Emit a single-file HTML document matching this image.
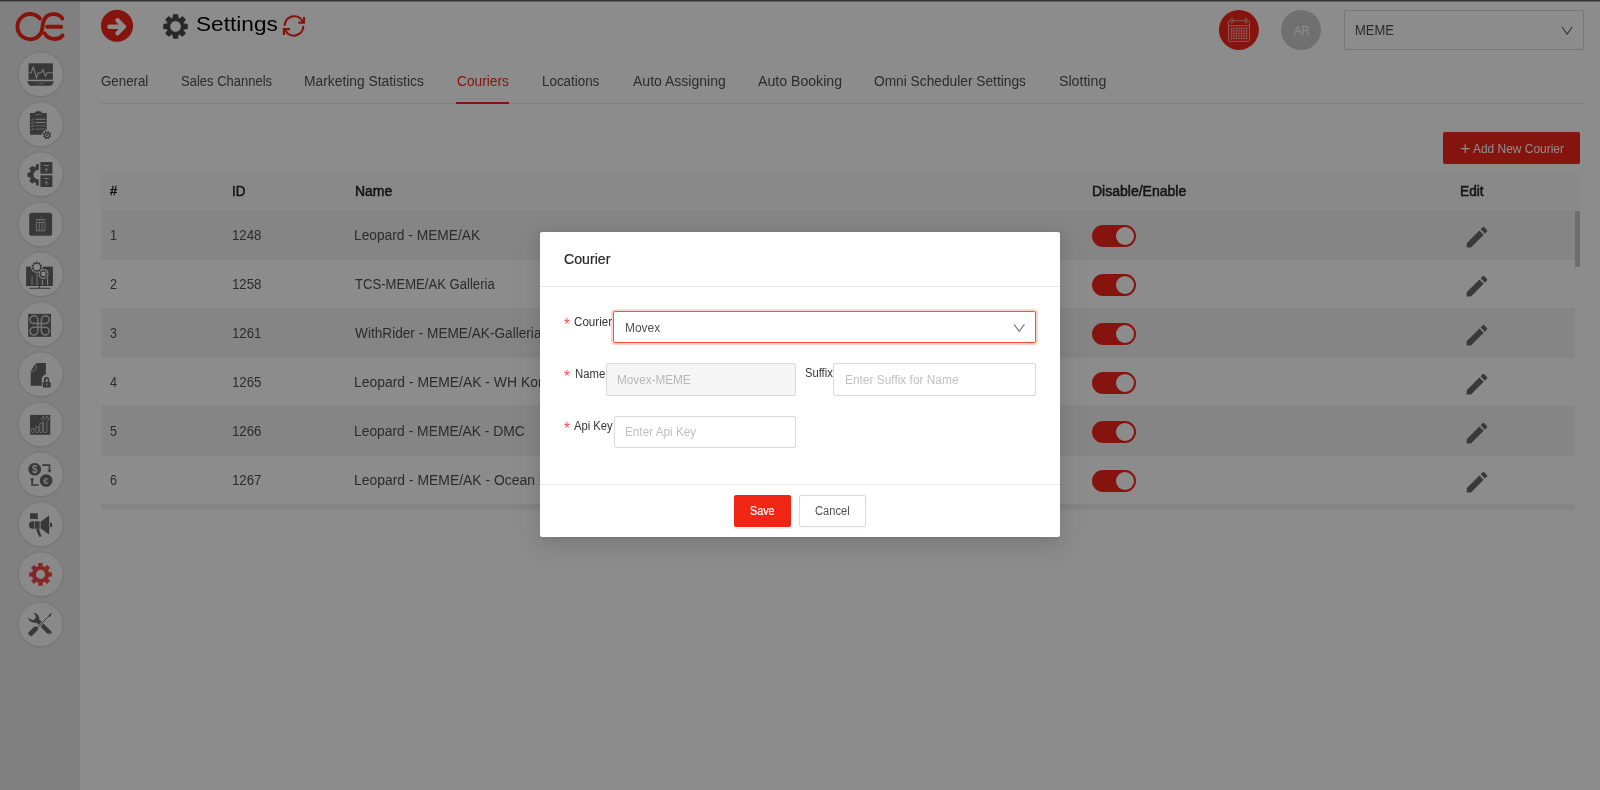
<!DOCTYPE html>
<html lang="en"><head><meta charset="utf-8"><title>Settings - Couriers</title>
<style>
*{box-sizing:border-box}
html,body{margin:0;padding:0}
body{width:1600px;height:790px;overflow:hidden;position:relative;background:#fff;font-family:"Liberation Sans", sans-serif;}
.abs,.t,.row,.tog{position:absolute}
.t{white-space:pre;display:block;transform-origin:0 0}
#page{position:absolute;left:0;top:0;width:1600px;height:790px;overflow:hidden;background:#fff}
#topline{position:absolute;left:0;top:0;width:1600px;height:2px;background:linear-gradient(#5e5e5e 0,#5e5e5e 1px,#b4b4b4 1px,#b4b4b4 2px)}
#sidebar{position:absolute;left:0;top:2px;width:80px;height:788px;background:#e9e9e9}
#tabline{position:absolute;left:101px;top:103px;width:1483px;height:1px;background:#e8e8e8}
#ink{position:absolute;left:456px;top:102px;width:53px;height:2px;background:#f5261a}
#addbtn{position:absolute;left:1443px;top:132px;width:137px;height:32px;border-radius:2px;background:#f5261a}
#thead{position:absolute;left:101px;top:172px;width:1479px;height:38px;background:#fafafa}
#tbody{position:absolute;left:101px;top:210px;width:1474px;height:300px;overflow:hidden}
.row{left:0;width:1474px}
.tog{left:991px;width:44px;height:22px;border-radius:11px;background:#f5261a}
.tog i{position:absolute;left:24px;top:2px;width:18px;height:18px;border-radius:50%;background:#fff}
#sbar{position:absolute;left:1575px;top:211px;width:5px;height:56px;background:#c8c8c8}
#mask{position:absolute;left:0;top:0;width:1600px;height:790px;background:rgba(0,0,0,.45)}
#modal{position:absolute;left:540px;top:232px;width:520px;height:305px;background:#fff;border-radius:2px;box-shadow:0 3px 6px -4px rgba(0,0,0,.12),0 6px 16px 0 rgba(0,0,0,.08),0 9px 28px 8px rgba(0,0,0,.05)}
.ln{position:absolute;left:540px;width:520px;height:1px;background:#e8e8e8}
.inp{position:absolute;height:32px;border:1px solid #d9d9d9;border-radius:2px;background:#fff}
</style></head><body>
<div id="page">
<div id="sidebar"></div>
<div id="topline"></div>
<svg class="abs" style="left:0;top:0;width:1px;height:1px"><defs><filter id="csh" x="-20%" y="-20%" width="140%" height="140%"><feDropShadow dx="0" dy="0.3" stdDeviation="0.9" flood-color="#000" flood-opacity=".26"/></filter></defs></svg>
<svg class="abs" style="left:0px;top:0px;width:80px;height:50px" viewBox="0 0 80 50"><g fill="none" stroke="#f5261a" stroke-width="3.900" stroke-linecap="round"><path d="M39.900 18.600A12.650 12.650 0 1 0 40.800 33.400C43.300 30 41.500 21 46 17C49 13.500 58 12.500 62.400 18.400"/><path d="M44.600 33.400C48 39.800 58 41 62.600 35.400"/><path d="M47 26.800H61.200"/></g></svg>
<svg class="abs" style="left:16px;top:50px;width:50px;height:50px" viewBox="0 0 50 50"><circle cx="24.7" cy="24.35" r="21.85" fill="#fafafa" filter="url(#csh)"/><g transform="translate(2.6 2.4)"><rect x="9.900" y="10.900" width="24.400" height="16.400" fill="#666"/>
<path d="M8.500 28.900H35.400L33.600 32.300Q33 33.400 31.800 33.400H12.100Q10.900 33.400 10.300 32.300Z" fill="#666"/>
<path d="M9.900 20.400H12.600L14.800 14.300L17.800 25.700L19.500 20.400H22.600L24.300 17L27 23.800L28.400 20.400H34.300" fill="none" stroke="#fafafa" stroke-width="1.100" stroke-linejoin="round" opacity=".8"/>
<g fill="#fafafa" opacity=".8"><circle cx="19.700" cy="31" r=".6"/><circle cx="22.100" cy="31" r=".6"/><circle cx="24.500" cy="31" r=".6"/></g></g></svg>
<svg class="abs" style="left:16px;top:100px;width:50px;height:50px" viewBox="0 0 50 50"><circle cx="24.7" cy="24.35" r="21.85" fill="#fafafa" filter="url(#csh)"/><g transform="translate(2.6 2.4)"><path d="M19.550 7.500L20.300 9.200H22.400Q23 9.200 23 9.800V10.600H28.100V32.300H11.300V10.600H16.200V9.800Q16.200 9.200 16.800 9.200H18.800Z" fill="#666"/>
<path d="M16.300 12.300H22.900" stroke="#fafafa" stroke-width=".8" opacity=".6"/>
<g stroke="#fafafa" stroke-width="1.100" fill="none"><path d="M16.700 16.900H27M16.700 20.100H27" opacity=".85"/><path d="M16.700 23.400H27M16.700 26.700H27" opacity=".45"/>
<path d="M12.300 17.200L13.300 18.200L15.300 15.600M12.300 20.400L13.300 21.400L15.300 18.800M12.300 23.700L13.300 24.700L15.300 22.100M12.300 27L13.300 28L15.300 25.400" stroke-width=".9" opacity=".8"/></g>
<circle cx="28.400" cy="32.700" r="5" fill="#fafafa"/>
<path d="M31.48 33.06 L32.50 33.60 L31.94 34.96 L30.83 34.62 L30.32 35.13 L30.66 36.24 L29.30 36.80 L28.76 35.78 L28.04 35.78 L27.50 36.80 L26.14 36.24 L26.48 35.13 L25.97 34.62 L24.86 34.96 L24.30 33.60 L25.32 33.06 L25.32 32.34 L24.30 31.80 L24.86 30.44 L25.97 30.78 L26.48 30.27 L26.14 29.16 L27.50 28.60 L28.04 29.62 L28.76 29.62 L29.30 28.60 L30.66 29.16 L30.32 30.27 L30.83 30.78 L31.94 30.44 L32.50 31.80 L31.48 32.34ZM26.50 32.70a1.90 1.90 0 1 0 3.80 0a1.90 1.90 0 1 0 -3.80 0Z" fill="#666" fill-rule="evenodd"/>
<circle cx="28.400" cy="32.700" r="1" fill="#666"/></g></svg>
<svg class="abs" style="left:16px;top:150px;width:50px;height:50px" viewBox="0 0 50 50"><circle cx="24.7" cy="24.35" r="21.85" fill="#fafafa" filter="url(#csh)"/><g transform="translate(2.6 2.4)"><clipPath id="hg"><rect x="0" y="0" width="20.200" height="44"/></clipPath>
<path clip-path="url(#hg)" d="M27.88 20.07 L30.29 20.27 L30.29 24.53 L27.88 24.73 L27.10 26.60 L28.66 28.46 L25.66 31.46 L23.80 29.90 L21.93 30.68 L21.73 33.09 L17.47 33.09 L17.27 30.68 L15.40 29.90 L13.54 31.46 L10.54 28.46 L12.10 26.60 L11.32 24.73 L8.91 24.53 L8.91 20.27 L11.32 20.07 L12.10 18.20 L10.54 16.34 L13.54 13.34 L15.40 14.90 L17.27 14.12 L17.47 11.71 L21.73 11.71 L21.93 14.12 L23.80 14.90 L25.66 13.34 L28.66 16.34 L27.10 18.20ZM14.90 22.40a4.70 4.70 0 1 0 9.40 0a4.70 4.70 0 1 0 -9.40 0Z" fill="#666" fill-rule="evenodd"/>
<rect x="21.800" y="9.600" width="12" height="11.700" fill="#666"/><rect x="21.800" y="22.900" width="12" height="11.700" fill="#666"/>
<g stroke="#fafafa" fill="none" opacity=".8"><path d="M25.200 13.100H30.300M25.200 26.100H30.300" stroke-width="1"/><path d="M27.800 19.800V16.200M26.600 17.500L27.800 16.100L29 17.500M27.800 32.800V29.200M26.600 30.500L27.800 29.100L29 30.500" stroke-width=".9"/></g></g></svg>
<svg class="abs" style="left:16px;top:200px;width:50px;height:50px" viewBox="0 0 50 50"><circle cx="24.7" cy="24.35" r="21.85" fill="#fafafa" filter="url(#csh)"/><g transform="translate(2.6 2.4)"><rect x="10.600" y="10.300" width="22.900" height="23.100" rx="2.600" fill="#666"/>
<g stroke="#fafafa" fill="none" opacity=".75"><path d="M17.300 17.300H26.800" stroke-width="1.200"/><path d="M21.300 14.900H22.900" stroke-width=".7"/><rect x="17.800" y="19.900" width="8.500" height="8.500" stroke-width=".9"/><path d="M20.650 19.900V28.400M23.450 19.900V28.400" stroke-width=".9"/></g></g></svg>
<svg class="abs" style="left:16px;top:250px;width:50px;height:50px" viewBox="0 0 50 50"><circle cx="24.7" cy="24.35" r="21.85" fill="#fafafa" filter="url(#csh)"/><g transform="translate(2.6 2.4)"><rect x="7.500" y="14.200" width="26.800" height="19.400" fill="#666"/>
<path d="M20.800 33.600V35.900M10.600 35.900H31.500" stroke="#666" stroke-width="1" fill="none"/>
<rect x="12.500" y="23.900" width="1.900" height="8.800" fill="#fafafa" opacity=".4"/><rect x="17.500" y="21.300" width="1.900" height="11.400" fill="#fafafa" opacity=".4"/>
<rect x="23.200" y="27.300" width="1.300" height="5.400" fill="#fafafa" opacity=".8"/><rect x="28.400" y="25.400" width="1.200" height="7.300" fill="#fafafa" opacity=".8"/>
<circle cx="18.200" cy="14.600" r="6.100" fill="#fafafa"/><circle cx="24.900" cy="21.500" r="5" fill="#fafafa"/>
<path d="M22.47 15.07 L23.60 15.63 L23.18 16.94 L21.94 16.73 L21.38 17.49 L21.97 18.61 L20.85 19.42 L19.97 18.52 L19.07 18.81 L18.89 20.06 L17.51 20.06 L17.33 18.81 L16.43 18.52 L15.55 19.42 L14.43 18.61 L15.02 17.49 L14.46 16.73 L13.22 16.94 L12.80 15.63 L13.93 15.07 L13.93 14.13 L12.80 13.57 L13.22 12.26 L14.46 12.47 L15.02 11.71 L14.43 10.59 L15.55 9.78 L16.43 10.68 L17.33 10.39 L17.51 9.14 L18.89 9.14 L19.07 10.39 L19.97 10.68 L20.85 9.78 L21.97 10.59 L21.38 11.71 L21.94 12.47 L23.18 12.26 L23.60 13.57 L22.47 14.13ZM14.90 14.60a3.30 3.30 0 1 0 6.60 0a3.30 3.30 0 1 0 -6.60 0Z" fill="#666" fill-rule="evenodd"/>
<path d="M28.23 20.81 L29.27 20.95 L29.27 22.05 L28.23 22.19 L28.00 22.90 L28.76 23.62 L28.11 24.51 L27.19 24.01 L26.58 24.45 L26.77 25.48 L25.72 25.82 L25.27 24.88 L24.53 24.88 L24.08 25.82 L23.03 25.48 L23.22 24.45 L22.61 24.01 L21.69 24.51 L21.04 23.62 L21.80 22.90 L21.57 22.19 L20.53 22.05 L20.53 20.95 L21.57 20.81 L21.80 20.10 L21.04 19.38 L21.69 18.49 L22.61 18.99 L23.22 18.55 L23.03 17.52 L24.08 17.18 L24.53 18.12 L25.27 18.12 L25.72 17.18 L26.77 17.52 L26.58 18.55 L27.19 18.99 L28.11 18.49 L28.76 19.38 L28.00 20.10ZM22.60 21.50a2.30 2.30 0 1 0 4.60 0a2.30 2.30 0 1 0 -4.60 0Z" fill="#666" fill-rule="evenodd"/></g></svg>
<svg class="abs" style="left:16px;top:300px;width:50px;height:50px" viewBox="0 0 50 50"><circle cx="24.7" cy="24.35" r="21.85" fill="#fafafa" filter="url(#csh)"/><g transform="translate(2.6 2.4)"><rect x="9.550" y="11.500" width="22.850" height="22.900" fill="#666"/>
<path d="M19.200 17.200A3.900 3.900 0 1 0 15.300 21.100H26.700A3.900 3.900 0 1 0 22.800 17.200V28.700A3.900 3.900 0 1 0 26.700 24.800H15.300A3.900 3.900 0 1 0 19.200 28.700Z" fill="none" stroke="#fafafa" stroke-width="1.500" stroke-linejoin="round" opacity=".72"/></g></svg>
<svg class="abs" style="left:16px;top:350px;width:50px;height:50px" viewBox="0 0 50 50"><circle cx="24.7" cy="24.35" r="21.85" fill="#fafafa" filter="url(#csh)"/><g transform="translate(2.6 2.4)"><path d="M17.500 10.600H27.300V33.400H12.100V19.300Z" fill="#666"/>
<path d="M16.300 11.500Q16.900 15.500 16.600 16.600L11.900 19.400Q14.600 15.800 16.300 11.500Z" fill="#666"/>
<path d="M17.200 10.900Q17.700 15.200 17.300 17.100L12.300 20" stroke="#fafafa" stroke-width=".7" fill="none" opacity=".9"/>
<path d="M24.500 30.200V26.900A3.400 3.400 0 0 1 31.300 26.900V30.200" fill="none" stroke="#fafafa" stroke-width="2.700"/>
<rect x="23.500" y="28.800" width="9.400" height="7.200" fill="#fafafa"/>
<path d="M26 30.200V27.200A1.900 1.900 0 0 1 29.800 27.200V30.200" fill="none" stroke="#666" stroke-width="1.500"/>
<rect x="24.300" y="29.600" width="7.800" height="5.600" rx=".5" fill="#666"/><rect x="27.600" y="30.900" width="1" height="2.600" fill="#fafafa" opacity=".85"/></g></svg>
<svg class="abs" style="left:16px;top:400px;width:50px;height:50px" viewBox="0 0 50 50"><circle cx="24.7" cy="24.35" r="21.85" fill="#fafafa" filter="url(#csh)"/><g transform="translate(2.6 2.4)"><rect x="11.450" y="12.500" width="20.200" height="19.900" fill="#666"/>
<g fill="none" stroke="#fafafa" stroke-width=".75" opacity=".75" stroke-linejoin="round"><path d="M12.800 26.200H15.400V29.200Q15.400 30.200 14.100 30.200Q12.800 30.200 12.800 29.200Z"/><path d="M17.100 24.200H19.800V29.200Q19.800 30.200 18.450 30.200Q17.100 30.200 17.100 29.200Z"/><path d="M21.200 20.700H23.900V29.200Q23.900 30.200 22.550 30.200Q21.200 30.200 21.200 29.200Z"/>
<path d="M25.300 13.600V16.200L26.600 17.300L27.900 16.200V13.600Q30 14.500 30 16.700Q30 18.400 28.300 19.300V29.200Q28.300 30.200 26.700 30.200Q25.100 30.200 25.100 29.200V19.300Q23.300 18.400 23.300 16.700Q23.300 14.500 25.300 13.600Z"/></g></g></svg>
<svg class="abs" style="left:16px;top:450px;width:50px;height:50px" viewBox="0 0 50 50"><circle cx="24.7" cy="24.35" r="21.85" fill="#fafafa" filter="url(#csh)"/><g transform="translate(2.6 2.4)"><circle cx="16.100" cy="16.900" r="6.300" fill="#666"/><circle cx="27.500" cy="28.100" r="6.300" fill="#666"/>
<text x="16.100" y="20.500" font-family="Liberation Sans, sans-serif" font-size="10" font-weight="700" fill="#fafafa" text-anchor="middle" opacity=".85">$</text>
<text x="27.300" y="31.600" font-family="Liberation Sans, sans-serif" font-size="9.500" font-weight="700" fill="#fafafa" text-anchor="middle" opacity=".85">€</text>
<path d="M23.700 12.700H30.900V18.300" fill="none" stroke="#666" stroke-width="1.700"/><path d="M28.800 17.600H33L30.900 20.300Z" fill="#666"/>
<path d="M19.900 32.600H13.500V27.200" fill="none" stroke="#666" stroke-width="1.700"/><path d="M11.400 27.800H15.600L13.500 25.100Z" fill="#666"/></g></svg>
<svg class="abs" style="left:16px;top:500px;width:50px;height:50px" viewBox="0 0 50 50"><circle cx="24.7" cy="24.35" r="21.85" fill="#fafafa" filter="url(#csh)"/><g transform="translate(2.6 2.4)"><path d="M11.450 10.800H19.200V16.500L18.600 17L17.800 16.500H11.450Z" fill="#666"/>
<path d="M15.750 18.800V26.400H14.200A3.800 3.800 0 0 1 14.200 18.800Z" fill="#666"/>
<rect x="16.400" y="18.800" width="3.800" height="7.600" fill="#666"/><rect x="20.700" y="18.800" width="1.100" height="7.600" fill="#666"/>
<path d="M22.400 19V26.200L29.700 31.600Q30.600 32.100 30.600 31.100V14.100Q30.600 13.100 29.700 13.600Z" fill="#666"/>
<path d="M31.400 20.200A2.400 2.400 0 0 1 31.400 25Z" fill="#666"/>
<path d="M19.100 27.900L21.500 33.300" stroke="#666" stroke-width="2.500" stroke-linecap="round"/><path d="M18 26.700L20.400 26.700L21 28.500L18.800 29Z" fill="#666"/></g></svg>
<svg class="abs" style="left:16px;top:550px;width:50px;height:50px" viewBox="0 0 50 50"><circle cx="24.7" cy="24.35" r="21.85" fill="#fafafa" filter="url(#csh)"/><g transform="translate(2.6 2.4)"><defs><linearGradient id="rg" x1="0" x2="1" y1="0" y2="0"><stop offset=".48" stop-color="#ec4354"/><stop offset=".5" stop-color="#f54c37"/></linearGradient></defs>
<path d="M30.39 19.90 L33.28 19.75 L33.28 24.25 L30.39 24.10 L29.40 26.49 L31.55 28.42 L28.37 31.60 L26.44 29.45 L24.05 30.44 L24.20 33.33 L19.70 33.33 L19.85 30.44 L17.46 29.45 L15.53 31.60 L12.35 28.42 L14.50 26.49 L13.51 24.10 L10.62 24.25 L10.62 19.75 L13.51 19.90 L14.50 17.51 L12.35 15.58 L15.53 12.40 L17.46 14.55 L19.85 13.56 L19.70 10.67 L24.20 10.67 L24.05 13.56 L26.44 14.55 L28.37 12.40 L31.55 15.58 L29.40 17.51ZM17.40 22.00a4.55 4.55 0 1 0 9.10 0a4.55 4.55 0 1 0 -9.10 0Z" fill="url(#rg)" fill-rule="evenodd"/></g></svg>
<svg class="abs" style="left:16px;top:600px;width:50px;height:50px" viewBox="0 0 50 50"><circle cx="24.7" cy="24.35" r="21.85" fill="#fafafa" filter="url(#csh)"/><g transform="translate(2.6 2.4)"><path d="M16.300 18.700L29.300 31.600A2.050 2.050 0 0 0 32.300 28.600L19.400 15.700Z" fill="#666"/>
<path d="M14.300 10.700Q19.500 10.300 20.500 15.200Q20.700 17 19.700 18.200L17.700 20.300Q15.500 20.700 13 19.700Q9.800 18.200 9.600 14.500Q11.800 18.200 14.700 17.600Q17.800 16.300 17 13.300Q16.300 11.300 14.300 10.700Z" fill="#666"/>
<circle cx="30.800" cy="31.400" r="1" fill="#fafafa" opacity=".85"/>
<path d="M18.600 26L32.200 11.700" stroke="#fafafa" stroke-width="2.300" fill="none"/>
<path d="M18.300 26.100L31 12.800" stroke="#666" stroke-width=".9" fill="none"/><path d="M30.300 12.800L32.600 10.900L32.200 12.900L30.800 14.300Z" fill="#666" stroke="#666" stroke-width=".6" stroke-linejoin="round"/>
<path d="M15.800 24.200L18.300 24.300L19.400 25.600L19.200 27.600L13.200 33.700Q12.500 34.200 11.800 33.600L9.700 31.500Q9.200 30.800 9.800 30.100Z" fill="#666"/></g></svg>
<svg class="abs" style="left:98px;top:6px;width:38px;height:40px" viewBox="98 6 38 40"><circle cx="117" cy="26.300" r="16" fill="#000" opacity=".10"/><circle cx="117" cy="25.750" r="16.050" fill="#f5261a"/><path d="M109.400 26.800H123.300M117.500 20.300L123.900 26.800L117.500 33.300" fill="none" stroke="#fff" stroke-width="4.400" stroke-linecap="round" stroke-linejoin="round"/></svg>
<svg class="abs" style="left:160px;top:10px;width:32px;height:32px" viewBox="160 10 32 32"><path fill="#4a4a4a" fill-rule="evenodd" stroke="#4a4a4a" stroke-width=".6" stroke-linejoin="round" d="M183.78 23.64 L187.54 24.22 L187.54 28.70 L183.78 29.28 L183.36 30.29 L185.61 33.36 L182.45 36.52 L179.38 34.27 L178.37 34.69 L177.79 38.45 L173.31 38.45 L172.73 34.69 L171.72 34.27 L168.65 36.52 L165.49 33.36 L167.74 30.29 L167.32 29.28 L163.56 28.70 L163.56 24.22 L167.32 23.64 L167.74 22.63 L165.49 19.56 L168.65 16.40 L171.72 18.65 L172.73 18.23 L173.31 14.47 L177.79 14.47 L178.37 18.23 L179.38 18.65 L182.45 16.40 L185.61 19.56 L183.36 22.63ZM169.95 26.46a5.60 5.60 0 1 0 11.20 0a5.60 5.60 0 1 0 -11.20 0Z"/></svg>
<svg class="abs" style="left:280px;top:12px;width:28px;height:28px" viewBox="280 12 28 28"><g fill="none" stroke="#f5261a" stroke-width="2.200"><path d="M284.700 24.900A9.500 9.500 0 0 1 302.700 21.600" stroke-linecap="round"/><path d="M304 17V22.700H298.300"/><path d="M303.300 26.900A9.500 9.500 0 0 1 285.300 30.200" stroke-linecap="round"/><path d="M283.900 34.900V29.200H290.100"/></g></svg>
<svg class="abs" style="left:1216px;top:7px;width:46px;height:46px" viewBox="1216 7 46 46"><circle cx="1238.900" cy="29.900" r="20" fill="#f5261a"/>
<g fill="none" stroke="#fff"><g opacity=".62" stroke-width=".9"><rect x="1228.500" y="20.700" width="21" height="20.700" rx=".8"/><path d="M1228.500 25.700H1249.500"/><rect x="1231" y="18.300" width="1.800" height="4.700" rx=".9" fill="#f5261a"/><rect x="1245.100" y="18.300" width="1.800" height="4.700" rx=".9" fill="#f5261a"/></g>
<path d="M1231.40 27.300V39.400M1233.93 27.300V39.400M1236.47 27.300V39.400M1239.00 27.300V39.400M1241.53 27.300V39.400M1244.07 27.300V39.400M1246.60 27.300V39.400M1230.300 28.30H1247.700M1230.300 30.82H1247.700M1230.300 33.35H1247.700M1230.300 35.88H1247.700M1230.300 38.40H1247.700" stroke-width=".9" opacity=".42"/></g></svg>
<div class="abs" style="left:1281px;top:10px;width:40px;height:40px;border-radius:50%;background:#ccc"></div>
<div class="abs" style="left:1344px;top:10px;width:240px;height:40px;border:1px solid #d9d9d9;border-radius:2px"></div>
<svg class="abs" style="left:1560px;top:25px;width:16px;height:13px" viewBox="1560 25 16 13"><path d="M1562.00 27.00L1567.10 34.00L1572.20 27.00" fill="none" stroke="#5c5c5c" stroke-width="1.1"/></svg>
<div id="tabline"></div><div id="ink"></div>
<div id="addbtn"></div>
<svg class="abs" style="left:1459px;top:141px;width:14px;height:14px" viewBox="1459 141 14 14"><path d="M1465.200 144.300V152.900M1460.900 148.600H1469.500" stroke="#fff" stroke-width="1.200" fill="none"/></svg>
<div id="thead"></div>
<div id="tbody">
<div class="row" style="top:0px;height:50px;background:#f2f2f2"></div>
<div class="row" style="top:98px;height:50px;background:#f2f2f2"></div>
<div class="row" style="top:196px;height:50px;background:#f2f2f2"></div>
<div class="row" style="top:294px;height:6px;background:#f2f2f2"></div>
<div class="tog" style="top:15px"><i></i></div>
<svg class="abs" style="left:1360px;top:10px;width:34px;height:34px" viewBox="1360 10 34 34"><g transform="translate(1362.27 13.46) scale(1.145)"><path fill="#686868" d="M3 17.25V21h3.75L17.81 9.940l-3.750-3.750L3 17.250zM20.710 7.040a.996.996 0 0 0 0-1.410l-2.340-2.340a.996.996 0 0 0-1.410 0l-1.830 1.830 3.750 3.750 1.830-1.830z"/></g></svg>
<div class="tog" style="top:64px"><i></i></div>
<svg class="abs" style="left:1360px;top:59px;width:34px;height:34px" viewBox="1360 59 34 34"><g transform="translate(1362.27 62.47) scale(1.145)"><path fill="#686868" d="M3 17.25V21h3.75L17.81 9.940l-3.750-3.750L3 17.250zM20.710 7.040a.996.996 0 0 0 0-1.410l-2.340-2.340a.996.996 0 0 0-1.410 0l-1.830 1.830 3.750 3.750 1.830-1.830z"/></g></svg>
<div class="tog" style="top:113px"><i></i></div>
<svg class="abs" style="left:1360px;top:108px;width:34px;height:34px" viewBox="1360 108 34 34"><g transform="translate(1362.27 111.47) scale(1.145)"><path fill="#686868" d="M3 17.25V21h3.75L17.81 9.940l-3.750-3.750L3 17.250zM20.710 7.040a.996.996 0 0 0 0-1.410l-2.340-2.340a.996.996 0 0 0-1.410 0l-1.830 1.830 3.750 3.750 1.830-1.830z"/></g></svg>
<div class="tog" style="top:162px"><i></i></div>
<svg class="abs" style="left:1360px;top:157px;width:34px;height:34px" viewBox="1360 157 34 34"><g transform="translate(1362.27 160.47) scale(1.145)"><path fill="#686868" d="M3 17.25V21h3.75L17.81 9.940l-3.750-3.750L3 17.250zM20.710 7.040a.996.996 0 0 0 0-1.410l-2.340-2.340a.996.996 0 0 0-1.410 0l-1.830 1.830 3.750 3.750 1.830-1.830z"/></g></svg>
<div class="tog" style="top:211px"><i></i></div>
<svg class="abs" style="left:1360px;top:206px;width:34px;height:34px" viewBox="1360 206 34 34"><g transform="translate(1362.27 209.47) scale(1.145)"><path fill="#686868" d="M3 17.25V21h3.75L17.81 9.940l-3.750-3.750L3 17.250zM20.710 7.040a.996.996 0 0 0 0-1.410l-2.340-2.340a.996.996 0 0 0-1.410 0l-1.830 1.830 3.750 3.750 1.830-1.830z"/></g></svg>
<div class="tog" style="top:260px"><i></i></div>
<svg class="abs" style="left:1360px;top:255px;width:34px;height:34px" viewBox="1360 255 34 34"><g transform="translate(1362.27 258.46) scale(1.145)"><path fill="#686868" d="M3 17.25V21h3.75L17.81 9.940l-3.750-3.750L3 17.250zM20.710 7.040a.996.996 0 0 0 0-1.410l-2.340-2.340a.996.996 0 0 0-1.410 0l-1.830 1.830 3.750 3.750 1.830-1.830z"/></g></svg>
</div>
<div id="sbar"></div>
<span class="t" style="left:196.2px;top:13.2px;font-size:21px;line-height:21px;color:#000;transform:scaleX(1.0779);">Settings</span>
<span class="t" style="left:1294.0px;top:24.5px;font-size:12px;line-height:12px;color:#fff;transform:scaleX(0.9357);">AR</span>
<span class="t" style="left:1355.4px;top:23.1px;font-size:14px;line-height:14px;color:#505050;transform:scaleX(0.9286);">MEME</span>
<span class="t" style="left:101.1px;top:74.3px;font-size:14px;line-height:14px;color:#505050;transform:scaleX(0.9496);">General</span>
<span class="t" style="left:180.5px;top:74.3px;font-size:14px;line-height:14px;color:#505050;transform:scaleX(0.9290);">Sales Channels</span>
<span class="t" style="left:304.3px;top:74.3px;font-size:14px;line-height:14px;color:#505050;transform:scaleX(0.9870);">Marketing Statistics</span>
<span class="t" style="left:456.9px;top:74.3px;font-size:14px;line-height:14px;color:#f5261a;transform:scaleX(0.9810);">Couriers</span>
<span class="t" style="left:541.6px;top:74.3px;font-size:14px;line-height:14px;color:#505050;transform:scaleX(0.9560);">Locations</span>
<span class="t" style="left:632.5px;top:74.3px;font-size:14px;line-height:14px;color:#505050;transform:scaleX(1.0019);">Auto Assigning</span>
<span class="t" style="left:757.7px;top:74.3px;font-size:14px;line-height:14px;color:#505050;transform:scaleX(1.0084);">Auto Booking</span>
<span class="t" style="left:874.1px;top:74.3px;font-size:14px;line-height:14px;color:#505050;transform:scaleX(0.9809);">Omni Scheduler Settings</span>
<span class="t" style="left:1058.7px;top:74.3px;font-size:14px;line-height:14px;color:#505050;transform:scaleX(1.0128);">Slotting</span>
<span class="t" style="left:1473.0px;top:142.0px;font-size:13px;line-height:13px;color:#fff;transform:scaleX(0.9192);">Add New Courier</span>
<span class="t" style="left:109.7px;top:184.9px;font-size:12.5px;line-height:12.5px;color:#262626;transform:scaleX(1.0355);-webkit-text-stroke:0.45px #262626;">#</span>
<span class="t" style="left:232.2px;top:183.9px;font-size:14px;line-height:14px;color:#262626;transform:scaleX(0.9571);-webkit-text-stroke:0.5px #262626;">ID</span>
<span class="t" style="left:355.0px;top:183.9px;font-size:14px;line-height:14px;color:#262626;transform:scaleX(0.9984);-webkit-text-stroke:0.5px #262626;">Name</span>
<span class="t" style="left:1092.0px;top:183.9px;font-size:14px;line-height:14px;color:#262626;transform:scaleX(1.0003);-webkit-text-stroke:0.5px #262626;">Disable/Enable</span>
<span class="t" style="left:1460.2px;top:183.9px;font-size:14px;line-height:14px;color:#262626;transform:scaleX(0.9782);-webkit-text-stroke:0.5px #262626;">Edit</span>
<span class="t" style="left:109.5px;top:227.7px;font-size:14px;line-height:14px;color:#505050;transform:scaleX(0.8978);">1</span>
<span class="t" style="left:232.2px;top:227.7px;font-size:14px;line-height:14px;color:#505050;transform:scaleX(0.9468);">1248</span>
<span class="t" style="left:354.2px;top:227.7px;font-size:14px;line-height:14px;color:#505050;transform:scaleX(0.9829);">Leopard - MEME/AK</span>
<span class="t" style="left:109.5px;top:276.7px;font-size:14px;line-height:14px;color:#505050;transform:scaleX(0.8978);">2</span>
<span class="t" style="left:232.2px;top:276.7px;font-size:14px;line-height:14px;color:#505050;transform:scaleX(0.9468);">1258</span>
<span class="t" style="left:355.0px;top:276.7px;font-size:14px;line-height:14px;color:#505050;transform:scaleX(0.9353);">TCS-MEME/AK Galleria</span>
<span class="t" style="left:109.5px;top:325.7px;font-size:14px;line-height:14px;color:#505050;transform:scaleX(0.8978);">3</span>
<span class="t" style="left:232.2px;top:325.7px;font-size:14px;line-height:14px;color:#505050;transform:scaleX(0.9468);">1261</span>
<span class="t" style="left:355.0px;top:325.7px;font-size:14px;line-height:14px;color:#505050;transform:scaleX(0.9745);">WithRider - MEME/AK-Galleria</span>
<span class="t" style="left:109.5px;top:374.7px;font-size:14px;line-height:14px;color:#505050;transform:scaleX(0.8978);">4</span>
<span class="t" style="left:232.2px;top:374.7px;font-size:14px;line-height:14px;color:#505050;transform:scaleX(0.9468);">1265</span>
<span class="t" style="left:354.2px;top:374.7px;font-size:14px;line-height:14px;color:#505050;transform:scaleX(0.9931);">Leopard - MEME/AK - WH Korangi</span>
<span class="t" style="left:109.5px;top:423.7px;font-size:14px;line-height:14px;color:#505050;transform:scaleX(0.8978);">5</span>
<span class="t" style="left:232.2px;top:423.7px;font-size:14px;line-height:14px;color:#505050;transform:scaleX(0.9468);">1266</span>
<span class="t" style="left:354.2px;top:423.7px;font-size:14px;line-height:14px;color:#505050;transform:scaleX(0.9889);">Leopard - MEME/AK - DMC</span>
<span class="t" style="left:109.5px;top:472.7px;font-size:14px;line-height:14px;color:#505050;transform:scaleX(0.8978);">6</span>
<span class="t" style="left:232.2px;top:472.7px;font-size:14px;line-height:14px;color:#505050;transform:scaleX(0.9468);">1267</span>
<span class="t" style="left:354.2px;top:472.7px;font-size:14px;line-height:14px;color:#505050;transform:scaleX(0.9941);">Leopard - MEME/AK - Ocean Mall</span>
</div>
<div id="mask"></div>
<div id="modal"></div>
<div class="ln" style="top:286px"></div>
<div class="ln" style="top:484px"></div>
<div class="inp" style="left:613px;top:311px;width:423px;border-color:#ff4d3a;box-shadow:0 0 0 2px rgba(245,38,26,.2)"></div>
<svg class="abs" style="left:1011px;top:322px;width:16px;height:13px" viewBox="1011 322 16 13"><path d="M1013.95 324.30L1019.20 331.30L1024.45 324.30" fill="none" stroke="#737373" stroke-width="1.1"/></svg>
<div class="inp" style="left:606px;top:363px;width:190px;height:33px;background:#f5f5f5"></div>
<div class="inp" style="left:833px;top:363px;width:203px;height:33px"></div>
<div class="inp" style="left:614px;top:416px;width:182px"></div>
<div class="abs" style="left:734px;top:495px;width:57px;height:32px;border-radius:2px;background:#f02514;box-shadow:0 2px 0 rgba(0,0,0,.045)"></div>
<div class="abs" style="left:799px;top:495px;width:67px;height:32px;border-radius:2px;border:1px solid #d9d9d9;background:#fff;box-shadow:0 2px 0 rgba(0,0,0,.015)"></div>
<span class="t" style="left:564.2px;top:252.1px;font-size:14px;line-height:14px;color:#262626;transform:scaleX(1.0108);-webkit-text-stroke:0.2px #262626;">Courier</span>
<span class="t" style="left:574.3px;top:315.6px;font-size:12px;line-height:12px;color:#363636;transform:scaleX(0.9680);">Courier</span>
<span class="t" style="left:624.8px;top:321.8px;font-size:12px;line-height:12px;color:#505050;transform:scaleX(0.9931);">Movex</span>
<span class="t" style="left:574.8px;top:367.7px;font-size:12px;line-height:12px;color:#363636;transform:scaleX(0.9433);">Name</span>
<span class="t" style="left:617.3px;top:374.0px;font-size:12px;line-height:12px;color:#b8b8b8;transform:scaleX(0.9782);">Movex-MEME</span>
<span class="t" style="left:804.6px;top:367.3px;font-size:12px;line-height:12px;color:#363636;transform:scaleX(0.9330);">Suffix</span>
<span class="t" style="left:844.5px;top:374.0px;font-size:12px;line-height:12px;color:#bfbfbf;transform:scaleX(0.9913);">Enter Suffix for Name</span>
<span class="t" style="left:574.3px;top:419.8px;font-size:12px;line-height:12px;color:#363636;transform:scaleX(0.9357);">Api Key</span>
<span class="t" style="left:625.2px;top:425.8px;font-size:12px;line-height:12px;color:#bfbfbf;transform:scaleX(0.9791);">Enter Api Key</span>
<span class="t" style="left:750.1px;top:504.6px;font-size:12px;line-height:12px;color:#fff;transform:scaleX(0.8991);-webkit-text-stroke:0.2px #fff;">Save</span>
<span class="t" style="left:814.8px;top:504.6px;font-size:12px;line-height:12px;color:#505050;transform:scaleX(0.9288);">Cancel</span>
<span class="t" style="left:563.5px;top:316.8px;font-size:16px;line-height:16px;color:#ff4d4f;transform:scaleX(0.9303);">*</span>
<span class="t" style="left:563.5px;top:368.9px;font-size:16px;line-height:16px;color:#ff4d4f;transform:scaleX(0.9303);">*</span>
<span class="t" style="left:563.5px;top:421.0px;font-size:16px;line-height:16px;color:#ff4d4f;transform:scaleX(0.9303);">*</span>
</body></html>
